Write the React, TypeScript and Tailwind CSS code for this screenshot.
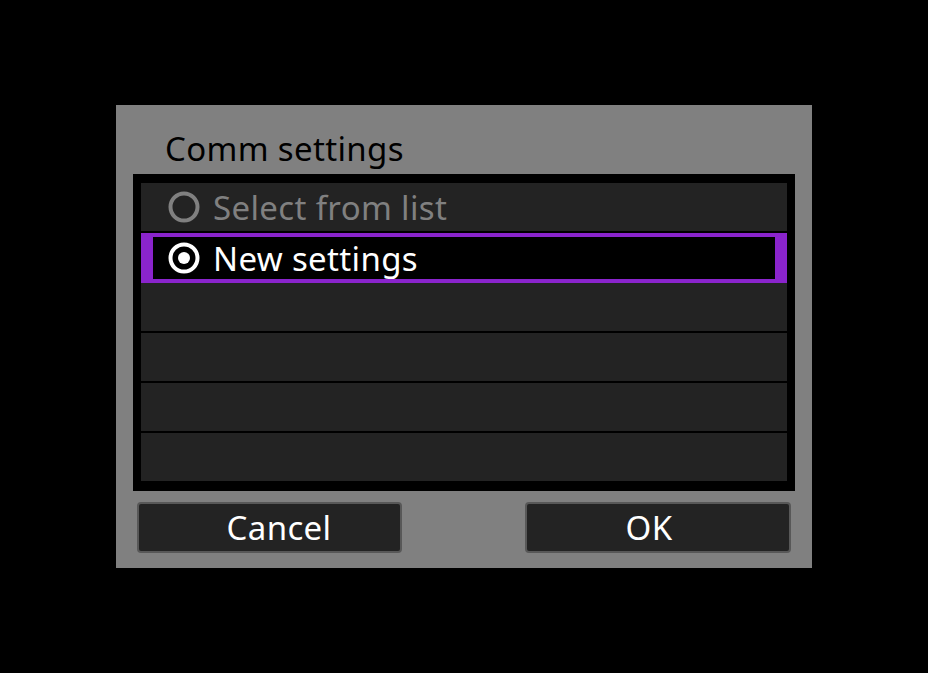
import React from 'react';

const font = { fontFamily: '"Noto Sans", "Open Sans", sans-serif' };

const Radio = ({ selected }: { selected: boolean }) => (
	<svg width="32" height="32" viewBox="0 0 32 32" className="shrink-0">
		<circle
			cx="16"
			cy="16"
			r="13.5"
			fill="none"
			stroke={selected ? '#ffffff' : '#808080'}
			strokeWidth="4"
		/>
		{selected && <circle cx="16" cy="16" r="6" fill="#ffffff" />}
	</svg>
);

const App = () => {
	return (
		<div
			className="flex h-screen w-full items-center justify-center bg-black tracking-[0.35px]"
			style={font}
		>
			<div className="flex h-[463px] w-[696px] flex-col bg-[#808080]">
				<div className="h-[69px] pl-[49px] pt-[22px] text-[33px] leading-[44px] text-black">
					Comm settings
				</div>
				<div className="ml-[17px] w-[662px] border-x-8 border-t-[9px] border-b-8 border-black bg-black">
					<div className="flex h-[50px] items-center gap-[13px] border-b-2 border-black bg-[#232323] pl-[27px] text-[33px] text-[#808080]">
						<Radio selected={false} />
						<span className="leading-none">Select from list</span>
					</div>
					<div className="flex h-[50px] items-center gap-[13px] border-x-[12px] border-y-4 border-[#8a24cc] bg-black pl-[15px] text-[33px] text-white">
						<Radio selected />
						<span className="leading-none">New settings</span>
					</div>
					{[0, 1, 2, 3].map((i) => (
						<div
							key={i}
							className="h-[50px] border-b-2 border-black bg-[#232323]"
						/>
					))}
				</div>
				<div className="mt-[11px] flex justify-between px-[21px]">
					<button
						type="button"
						className="flex h-[51px] w-[265px] items-center justify-center rounded-[4px] border-2 border-[#585858] bg-[#232323] pl-[19px] text-[33px] text-white"
					>
						Cancel
					</button>
					<button
						type="button"
						className="flex h-[51px] w-[266px] items-center justify-center rounded-[4px] border-2 border-[#585858] bg-[#232323] pr-[18px] text-[33px] text-white"
					>
						OK
					</button>
				</div>
			</div>
		</div>
	);
};

export default App;
